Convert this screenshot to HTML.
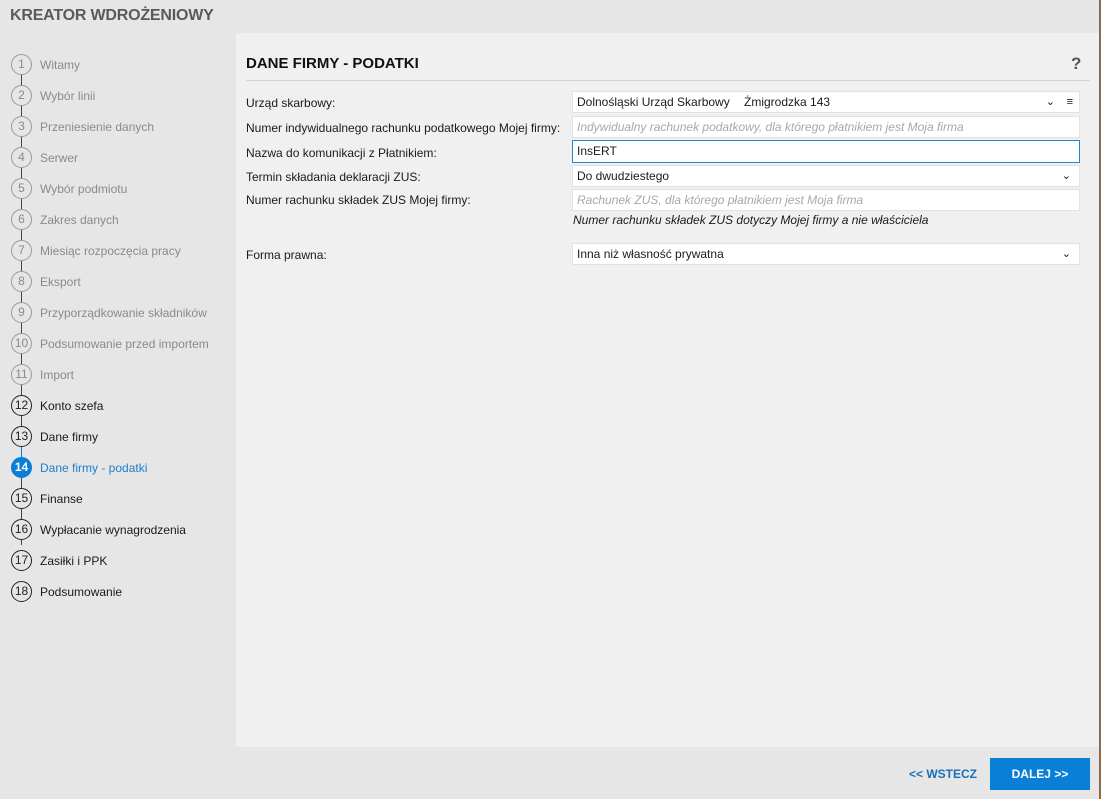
<!DOCTYPE html>
<html><head><meta charset="utf-8"><style>
*{margin:0;padding:0;box-sizing:border-box}
body{width:1101px;height:799px;background:#e6e6e6;font-family:"Liberation Sans",sans-serif;font-size:12px;color:#1a1a1a;position:relative;overflow:hidden}
.abs{position:absolute}
.title{left:10px;top:7px;font-size:16px;font-weight:bold;color:#5a5a5a;letter-spacing:-0.2px}
.panel{left:236px;top:33px;width:863px;height:714px;background:#f0f0f0}
.edge{left:1099px;top:0;width:2px;height:799px;background:#8a6a4a}
.step{position:absolute;left:11px;height:22px;line-height:22px;white-space:nowrap}
.c{position:absolute;left:0;top:0;width:21px;height:21px;border:1.5px solid #9a9a9a;border-radius:50%;text-align:center;line-height:18px;font-size:12px;color:#8a8a8a;background:#e6e6e6}
.step span.t{position:absolute;left:29px;top:0;color:#8a8a8a}
.done .c{border-color:#222;color:#222}.done span.t{color:#1a1a1a}
.cur .c{border-color:#0a7fd8;background:#0a7fd8;color:#fff;font-weight:bold}.cur span.t{color:#1a7fd0}
.line{position:absolute;left:21px;width:1px;background:#444}
.lbl{position:absolute;left:246px}
.in{position:absolute;left:572px;width:508px;height:22px;background:#fff;border:1px solid #e2e2e2;padding-left:4px;line-height:20px;white-space:nowrap}
.ph{color:#a8a8a8;font-style:italic}
.chev{position:absolute;right:8px;top:0;font-size:11px}
</style></head><body>
<div class="abs title">KREATOR WDROŻENIOWY</div>
<div class="abs edge"></div>
<div class="abs panel"></div>
<div class="line" style="top:75px;height:470px;"></div>
<div class="line" style="top:447px;height:10px;background:#0a7fd8"></div>

<div class="step" style="top:54px"><div class="c">1</div><span class="t">Witamy</span></div>
<div class="step" style="top:85px"><div class="c">2</div><span class="t">Wybór linii</span></div>
<div class="step" style="top:116px"><div class="c">3</div><span class="t">Przeniesienie danych</span></div>
<div class="step" style="top:147px"><div class="c">4</div><span class="t">Serwer</span></div>
<div class="step" style="top:178px"><div class="c">5</div><span class="t">Wybór podmiotu</span></div>
<div class="step" style="top:209px"><div class="c">6</div><span class="t">Zakres danych</span></div>
<div class="step" style="top:240px"><div class="c">7</div><span class="t">Miesiąc rozpoczęcia pracy</span></div>
<div class="step" style="top:271px"><div class="c">8</div><span class="t">Eksport</span></div>
<div class="step" style="top:302px"><div class="c">9</div><span class="t">Przyporządkowanie składników</span></div>
<div class="step" style="top:333px"><div class="c">10</div><span class="t">Podsumowanie przed importem</span></div>
<div class="step" style="top:364px"><div class="c">11</div><span class="t">Import</span></div>
<div class="step done" style="top:395px"><div class="c">12</div><span class="t">Konto szefa</span></div>
<div class="step done" style="top:426px"><div class="c">13</div><span class="t">Dane firmy</span></div>
<div class="step cur" style="top:457px"><div class="c">14</div><span class="t">Dane firmy - podatki</span></div>
<div class="step done" style="top:488px"><div class="c">15</div><span class="t">Finanse</span></div>
<div class="step done" style="top:519px"><div class="c">16</div><span class="t">Wypłacanie wynagrodzenia</span></div>
<div class="step done" style="top:550px"><div class="c">17</div><span class="t">Zasiłki i PPK</span></div>
<div class="step done" style="top:581px"><div class="c">18</div><span class="t">Podsumowanie</span></div>

<div class="abs" style="left:246px;top:55px;font-size:15px;font-weight:bold;color:#111">DANE FIRMY - PODATKI</div>
<div class="abs" style="left:1071px;top:54px;font-size:17px;font-weight:bold;color:#555">?</div>
<div class="abs" style="left:246px;top:80px;width:844px;height:1px;background:#d4d4d4"></div>

<div class="lbl" style="top:96px">Urząd skarbowy:</div>
<div class="lbl" style="top:121px">Numer indywidualnego rachunku podatkowego Mojej firmy:</div>
<div class="lbl" style="top:146px">Nazwa do komunikacji z Płatnikiem:</div>
<div class="lbl" style="top:170px">Termin składania deklaracji ZUS:</div>
<div class="lbl" style="top:193px">Numer rachunku składek ZUS Mojej firmy:</div>
<div class="lbl" style="top:248px">Forma prawna:</div>

<div class="in" style="top:91px">Dolnośląski Urząd Skarbowy<span style="position:absolute;left:171px">Żmigrodzka 143</span><span class="chev" style="right:24px">&#8964;</span><span class="chev" style="right:6px">&#8801;</span></div>
<div class="in ph" style="top:116px">Indywidualny rachunek podatkowy, dla którego płatnikiem jest Moja firma</div>
<div class="in" style="top:140px;border:1.5px solid #1a8ad8;height:23px">InsERT</div>
<div class="in" style="top:165px">Do dwudziestego<span class="chev">&#8964;</span></div>
<div class="in ph" style="top:189px">Rachunek ZUS, dla którego płatnikiem jest Moja firma</div>
<div class="abs" style="left:573px;top:213px;font-style:italic">Numer rachunku składek ZUS dotyczy Mojej firmy a nie właściciela</div>
<div class="in" style="top:243px">Inna niż własność prywatna<span class="chev">&#8964;</span></div>

<div class="abs" style="left:909px;top:767px;font-weight:bold;color:#1a6fb8">&lt;&lt; WSTECZ</div>
<div class="abs" style="left:990px;top:758px;width:100px;height:32px;background:#0a7fd8;color:#fff;font-weight:bold;text-align:center;line-height:32px">DALEJ &gt;&gt;</div>
</body></html>
